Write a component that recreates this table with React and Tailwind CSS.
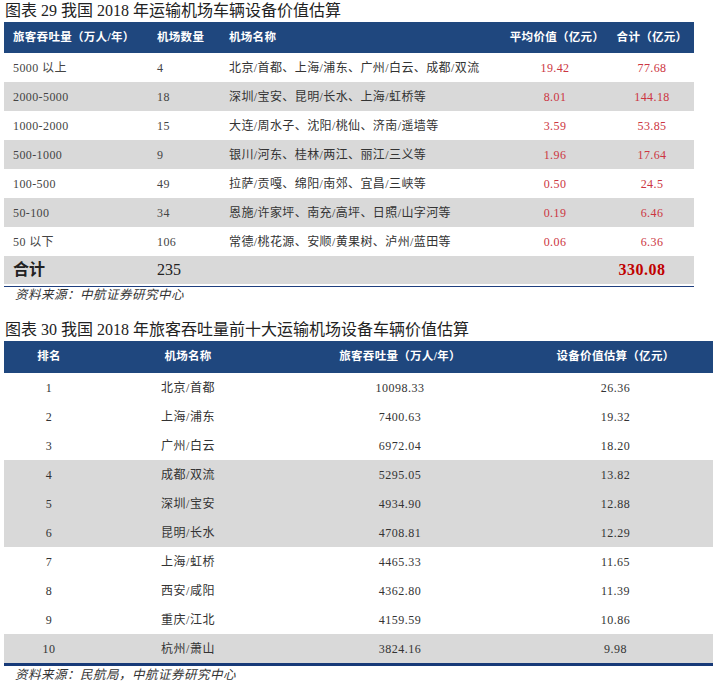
import React from 'react';

const serif = "font-['Liberation_Serif','Noto_Sans_CJK_SC',serif]";

const fleet = [
  { range: '5000 以上', count: '4', names: '北京/首都、上海/浦东、广州/白云、成都/双流', avg: '19.42', total: '77.68' },
  { range: '2000-5000', count: '18', names: '深圳/宝安、昆明/长水、上海/虹桥等', avg: '8.01', total: '144.18' },
  { range: '1000-2000', count: '15', names: '大连/周水子、沈阳/桃仙、济南/遥墙等', avg: '3.59', total: '53.85' },
  { range: '500-1000', count: '9', names: '银川/河东、桂林/两江、丽江/三义等', avg: '1.96', total: '17.64' },
  { range: '100-500', count: '49', names: '拉萨/贡嘎、绵阳/南郊、宜昌/三峡等', avg: '0.50', total: '24.5' },
  { range: '50-100', count: '34', names: '恩施/许家坪、南充/高坪、日照/山字河等', avg: '0.19', total: '6.46' },
  { range: '50 以下', count: '106', names: '常德/桃花源、安顺/黄果树、泸州/蓝田等', avg: '0.06', total: '6.36' },
];

const top10 = [
  ['1', '北京/首都', '10098.33', '26.36'],
  ['2', '上海/浦东', '7400.63', '19.32'],
  ['3', '广州/白云', '6972.04', '18.20'],
  ['4', '成都/双流', '5295.05', '13.82'],
  ['5', '深圳/宝安', '4934.90', '12.88'],
  ['6', '昆明/长水', '4708.81', '12.29'],
  ['7', '上海/虹桥', '4465.33', '11.65'],
  ['8', '西安/咸阳', '4362.80', '11.39'],
  ['9', '重庆/江北', '4159.59', '10.86'],
  ['10', '杭州/萧山', '3824.16', '9.98'],
];

// table 2 shades rows 4-6 and the last one
const shaded = (i) => (i >= 3 && i <= 5) || i === 9;

const grid1 = 'grid grid-cols-[146px_72px_278px_110px_84px] items-center';
const grid2 = 'grid grid-cols-[90px_188px_236px_195px] items-center';

export default function App() {
  return (
    <div className={`w-[716px] h-[687px] bg-white text-[#333] overflow-hidden ${serif}`}>
      {/* 图表 29 */}
      <div className="h-[22px] pl-[5px] flex items-center text-[16px] text-[#222] leading-none">
        图表 29 我国 2018 年运输机场车辆设备价值估算
      </div>
      <div className="ml-[4px] w-[690px]">
        <div className={`${grid1} h-[31px] bg-[#1f477e] text-white font-bold text-[11.5px] tracking-[0.3px]`}>
          <div className="pl-[9px]">旅客吞吐量（万人/年）</div>
          <div className="pl-[7px]">机场数量</div>
          <div className="pl-[7px]">机场名称</div>
          <div className="text-center pl-[4px]">平均价值（亿元）</div>
          <div className="text-center">合计（亿元）</div>
        </div>
        {fleet.map((r, i) => (
          <div key={r.range} className={`${grid1} h-[29px] text-[12px] tracking-[0.4px] ${i % 2 === 1 ? 'bg-[#d9d9d9]' : 'bg-white'}`}>
            <div className="pl-[9px] text-[#444]">{r.range}</div>
            <div className="pl-[7px] text-[#444]">{r.count}</div>
            <div className="pl-[7px] whitespace-nowrap">{r.names}</div>
            <div className="text-center text-[#cc3541]">{r.avg}</div>
            <div className="text-center text-[#cc3541]">{r.total}</div>
          </div>
        ))}
        <div className={`${grid1} h-[28px] bg-[#d9d9d9]`}>
          <div className="pl-[9px] text-[16px] font-bold text-[#222]">合计</div>
          <div className="pl-[7px] text-[16px] text-[#222]">235</div>
          <div></div>
          <div></div>
          <div className="text-center pr-[20px] text-[16px] font-bold text-[#c00000] tracking-[0.5px]">330.08</div>
        </div>
        <div className="mt-[2px] h-px bg-[#1f3f7f]"></div>
      </div>
      <div className="h-[17px] pl-[15px] flex items-center italic text-[12.5px] tracking-[0.5px] text-[#333]">
        资料来源：中航证券研究中心
      </div>

      {/* 图表 30 */}
      <div className="mt-[15px] h-[22px] pl-[5px] flex items-center text-[16px] text-[#222] leading-none">
        图表 30 我国 2018 年旅客吞吐量前十大运输机场设备车辆价值估算
      </div>
      <div className="ml-[4px] w-[709px]">
        <div className={`${grid2} h-[32px] bg-[#1f477e] text-white font-bold text-[11.5px] tracking-[0.3px] text-center`}>
          <div>排名</div>
          <div>机场名称</div>
          <div>旅客吞吐量（万人/年）</div>
          <div>设备价值估算（亿元）</div>
        </div>
        {top10.map((r, i) => (
          <div key={r[0]} className={`${grid2} h-[29px] text-[12px] tracking-[0.5px] text-center ${shaded(i) ? 'bg-[#d9d9d9]' : 'bg-white'}`}>
            <div>{r[0]}</div>
            <div>{r[1]}</div>
            <div>{r[2]}</div>
            <div>{r[3]}</div>
          </div>
        ))}
        <div className="h-[3px] bg-[#173a78]"></div>
      </div>
      <div className="h-[19px] pl-[15px] flex items-center italic text-[12.5px] tracking-[0.5px] text-[#333]">
        资料来源：民航局，中航证券研究中心
      </div>
    </div>
  );
}
